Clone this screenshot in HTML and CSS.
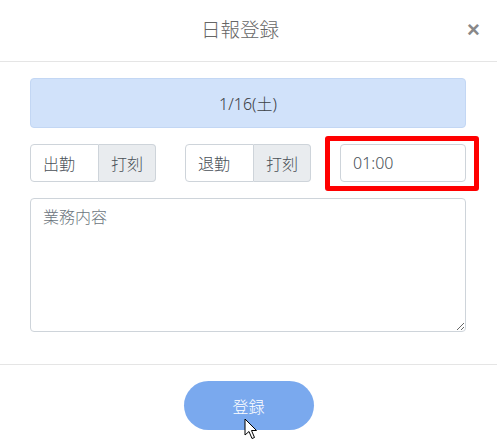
FILE: index.html
```html
<!DOCTYPE html>
<html lang="ja">
<head>
  <meta charset="UTF-8">
  <meta name="viewport" content="width=device-width, initial-scale=1.0">
  <title>日報登録</title>
  <link rel="stylesheet" href="styles.css">
</head>
<body>
  <div class="modal">
    <!-- ヘッダー -->
    <div class="modal-header">
      <h4 class="modal-title">日報登録</h4>
      <button class="close" type="button">×</button>
    </div>

    <!-- 本文 -->
    <div class="modal-body">
      <div class="date-box">1/16(土)</div>

      <div class="time-row">
        <div class="input-group">
          <input class="form-control" type="text" value="出勤" readonly>
          <span class="input-group-text">打刻</span>
        </div>
        <div class="input-group">
          <input class="form-control" type="text" value="退勤" readonly>
          <span class="input-group-text">打刻</span>
        </div>
        <div class="rest-col">
          <input class="form-control" type="text" value="01:00">
          <span class="highlight"></span>
        </div>
      </div>

      <textarea class="form-control memo" placeholder="業務内容"></textarea>
    </div>

    <!-- フッター -->
    <div class="modal-footer">
      <button class="btn-submit" type="button">登録</button>
      <svg class="pointer" width="14" height="22" viewBox="0 0 14 22">
        <path d="M1 1 L1 17 L5 13.5 L8 20.5 L10.5 19.5 L7.5 12.5 L12.5 12.5 Z" fill="#fff" stroke="#000" stroke-width="1" stroke-linejoin="round"/>
      </svg>
    </div>
  </div>
</body>
</html>
```

FILE: styles.css
```css
* { box-sizing: border-box; }
body {
  margin: 0;
  font-family: 'Noto Sans', 'Noto Sans CJK JP', sans-serif;
  font-weight: 300;
  background: #fff;
  color: #495057;
}
.modal {
  width: 497px;
  background: #fff;
}
.modal-header {
  display: flex;
  align-items: center;
  height: 62px;
  padding: 0 15px 2px 15px;
  border-bottom: 1px solid #e5e5e5;
}
.modal-title {
  flex: 1;
  margin: 0;
  text-align: center;
  font-size: 19.5px;
  font-weight: 300;
  line-height: 1.2;
  color: #666;
}
.close {
  width: 17px;
  padding: 0;
  border: none;
  background: none;
  font-family: 'Liberation Sans', sans-serif;
  font-size: 22px;
  font-weight: 700;
  line-height: 1;
  color: #888;
  cursor: pointer;
}
.modal-body {
  padding: 16px 31px 32px 30px;
}
.date-box {
  height: 50px;
  display: flex;
  align-items: center;
  justify-content: center;
  background: #d1e2fa;
  border: 1px solid #c3d7f4;
  border-radius: 4px;
  font-size: 16px;
  color: #3c4045;
  margin-bottom: 16px;
}
.time-row {
  display: grid;
  grid-template-columns: repeat(3, 1fr);
  column-gap: 29px;
  margin-bottom: 16px;
}
.input-group {
  display: flex;
  height: 38px;
}
.form-control {
  display: block;
  width: 100%;
  height: 38px;
  padding: 6px 12px;
  font-family: inherit;
  font-size: 16px;
  font-weight: 300;
  line-height: 24px;
  color: #495057;
  background: #fff;
  border: 1px solid #ced4da;
  border-radius: 4px;
  outline: none;
}
.input-group .form-control {
  flex: 1;
  min-width: 0;
  border-radius: 4px 0 0 4px;
}
.input-group-text {
  display: flex;
  align-items: center;
  padding: 0 12px;
  font-size: 16px;
  color: #495057;
  background: #e9ecef;
  border: 1px solid #ced4da;
  border-left: none;
  border-radius: 0 4px 4px 0;
}
.rest-col {
  position: relative;
}
/* 注目箇所の赤枠 */
.highlight {
  position: absolute;
  left: -15px;
  right: -13px;
  top: -8px;
  bottom: -9px;
  border: 5.5px solid #f00;
  border-radius: 3px;
  pointer-events: none;
}
.memo {
  height: 134px;
  resize: vertical;
}
.memo::placeholder {
  color: #6c757d;
}
.modal-footer {
  position: relative;
  display: flex;
  justify-content: center;
  padding: 16px 0 12px 0;
  border-top: 1px solid #e5e5e5;
}
.btn-submit {
  width: 130px;
  height: 49px;
  border: none;
  border-radius: 25px;
  background: #7aa9ee;
  color: #fff;
  font-family: inherit;
  font-size: 16px;
  font-weight: 300;
  cursor: pointer;
}
.pointer {
  position: absolute;
  left: 244px;
  top: 53px;
}
```
